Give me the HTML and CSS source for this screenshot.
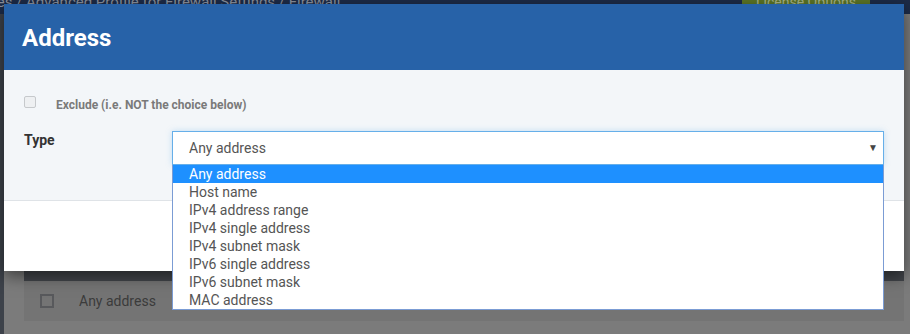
FILE: index.html
```html
<!DOCTYPE html>
<html lang="en">
<head>
    <meta charset="UTF-8">
    <meta name="viewport" content="width=device-width, initial-scale=1.0">
    <title>Address</title>
    <link rel="stylesheet" href="styles.css">
</head>
<body>
    <!-- page behind the modal (already dimmed) -->
    <div class="page">
        <div class="topbar">
            <span class="crumbs">Policies / Advanced Profile for Firewall Settings / Firewall</span>
            <span class="license-btn">License Options</span>
        </div>
        <div class="page-main">
            <div class="table">
                <div class="table-head"></div>
                <div class="table-row">
                    <span class="row-check"></span>
                    <span class="row-text">Any address</span>
                </div>
            </div>
        </div>
    </div>

    <div class="modal">
        <div class="modal-header">
            <h2>Address</h2>
        </div>
        <div class="modal-body">
            <label class="exclude">
                <span class="checkbox"></span>
                Exclude (i.e. NOT the choice below)
            </label>
            <div class="form-row">
                <span class="field-label">Type</span>
                <div class="select-wrap">
                    <div class="select">
                        <span>Any address</span>
                        <span class="arrow">&#9660;</span>
                    </div>
                    <ul class="options">
                        <li class="selected">Any address</li>
                        <li>Host name</li>
                        <li>IPv4 address range</li>
                        <li>IPv4 single address</li>
                        <li>IPv4 subnet mask</li>
                        <li>IPv6 single address</li>
                        <li>IPv6 subnet mask</li>
                        <li>MAC address</li>
                    </ul>
                </div>
            </div>
        </div>
        <div class="modal-footer"></div>
    </div>
</body>
</html>
```

FILE: styles.css
```css
* {
    margin: 0;
    padding: 0;
    box-sizing: border-box;
}

body {
    font-family: Roboto, "Liberation Sans", Arial, sans-serif;
    width: 910px;
    height: 334px;
    overflow: hidden;
    background: #7b7b7b;
    position: relative;
}

/* Background page */
.page {
    height: 100%;
    display: flex;
    flex-direction: column;
}

.topbar {
    height: 14px;
    background: #1c2b48;
    display: flex;
    justify-content: space-between;
    align-items: flex-end;
    overflow: hidden;
    padding-right: 40px;
}

.crumbs {
    font-size: 15px;
    line-height: 15px;
    color: #8a909c;
    margin-left: -40px;
    margin-bottom: 4px;
    white-space: nowrap;
}

.license-btn {
    background: #5b7426;
    color: #a9b48a;
    font-size: 14px;
    line-height: 20px;
    padding: 0 14px;
    margin-bottom: 2px;
}

.page-main {
    flex: 1;
    display: flex;
    padding-left: 24px;
    padding-right: 6px;
    border-left: 4px solid #3d424a;
}

.table {
    flex: 1;
    margin-top: 257px;
    margin-left: -4px;
}

.table-head {
    height: 10px;
    background: #414449;
}

.table-row {
    height: 40px;
    background: #747474;
    display: flex;
    align-items: center;
    padding-left: 16px;
}

.row-check {
    width: 14px;
    height: 14px;
    border: 2px solid #58595c;
}

.row-text {
    margin-left: 25px;
    font-size: 14px;
    color: #3b3b3b;
}

/* Modal */
.modal {
    position: absolute;
    top: 4px;
    left: 4px;
    width: 900px;
    box-shadow: 0 5px 15px rgba(0, 0, 0, 0.5);
}

.modal-header {
    height: 66px;
    background: #2762a8;
    display: flex;
    align-items: center;
    padding-left: 18px;
}

.modal-header h2 {
    color: #fff;
    font-size: 24px;
    font-weight: 700;
    margin-top: 1px;
}

.modal-body {
    height: 131px;
    background: #f3f6f9;
    border-bottom: 1px solid #dfe3e7;
    padding: 26px 20px 0 20px;
}

.exclude {
    display: flex;
    align-items: center;
    height: 18px;
    font-size: 12px;
    font-weight: 700;
    color: #7a7a7a;
}

.checkbox {
    width: 12px;
    height: 12px;
    border: 1px solid #c6c9cc;
    border-radius: 2px;
    background: #eef0f2;
    margin: -6px 20px 0 0;
}

.form-row {
    display: flex;
    margin-top: 17px;
}

.field-label {
    width: 148px;
    font-size: 14px;
    font-weight: 700;
    color: #333;
    padding-top: 1px;
}

.select-wrap {
    flex: 1;
    position: relative;
}

.select {
    height: 34px;
    background: #fff;
    border: 1px solid #66afe9;
    box-shadow: 0 0 6px rgba(102, 175, 233, 0.35);
    display: flex;
    align-items: center;
    justify-content: space-between;
    padding: 0 5px 0 16px;
    font-size: 14px;
    color: #555;
}

.arrow {
    font-size: 10px;
    color: #444;
    margin-top: -1px;
}

.options {
    position: absolute;
    top: 100%;
    left: 0;
    right: 0;
    list-style: none;
    background: #fff;
    border: 1px solid #7b9cd4;
    border-top: none;
    z-index: 2;
}

.options li {
    height: 18px;
    line-height: 18px;
    padding-left: 16px;
    font-size: 14px;
    color: #555;
}

.options li.selected {
    background: #1e90ff;
    color: #fff;
}

.modal-footer {
    height: 70px;
    background: #fff;
}
```
